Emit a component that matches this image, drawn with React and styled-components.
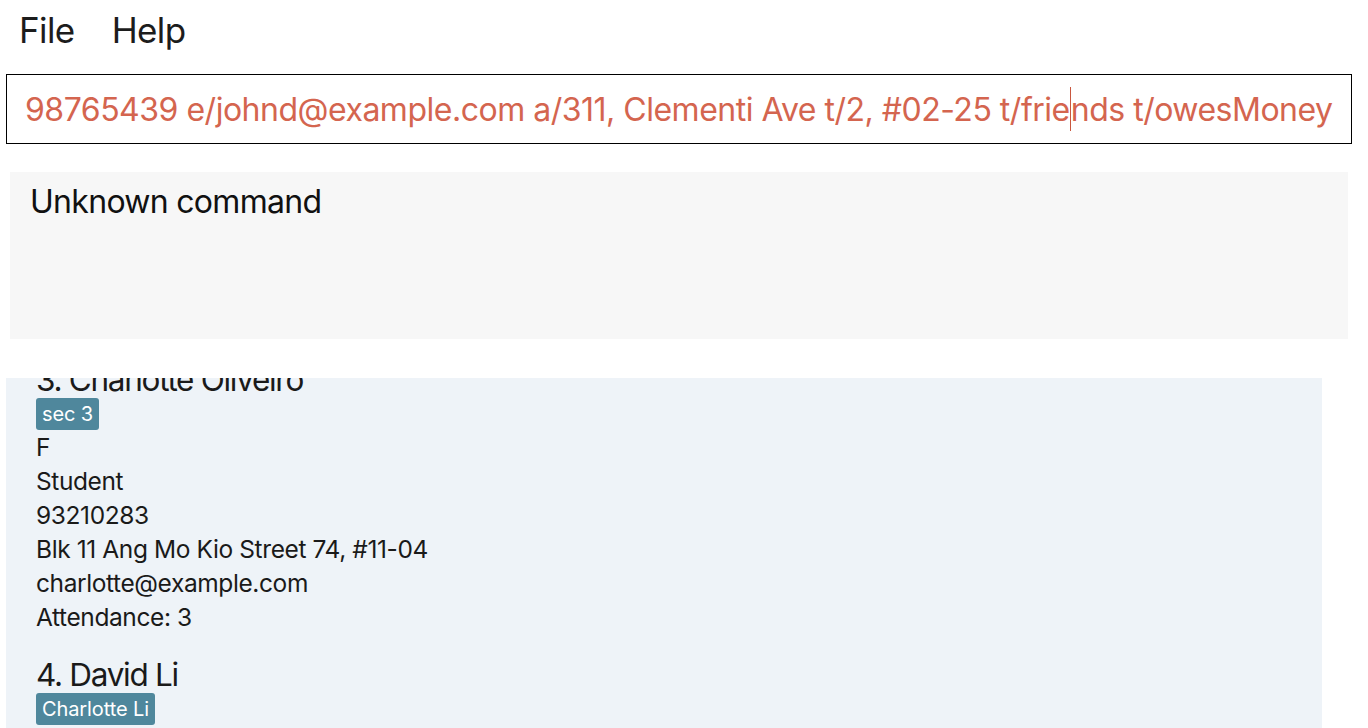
import React from "react";
import styled, { createGlobalStyle } from "styled-components";

const GlobalStyle = createGlobalStyle`
  html, body { margin: 0; padding: 0; background: #ffffff; }
  body {
    font-family: Inter, "Noto Sans", "Liberation Sans", sans-serif;
    color: #1a1a1a;
    width: 1368px;
    height: 728px;
    overflow: hidden;
  }
`;

const Window = styled.div`
  display: flex;
  flex-direction: column;
  width: 1368px;
  height: 728px;
  overflow: hidden;
`;

const MenuBar = styled.nav`
  display: flex;
  align-items: center;
  gap: 37px;
  height: 60px;
  padding-left: 19px;
`;

const MenuItem = styled.span`
  font-size: 35px;
  letter-spacing: -0.6px;
  color: #1c1c1c;
`;

const CommandBox = styled.div`
  margin: 14px 16px 0 6px;
  height: 68px;
  border: 1px solid #000;
  display: flex;
  align-items: center;
  padding: 0 20px 0 18px;
  overflow: hidden;
  white-space: nowrap;
  font-size: 32px;
  letter-spacing: -0.49px;
  color: #d4654f;
`;

const Caret = styled.span`
  display: inline-block;
  flex: none;
  width: 1px;
  height: 44px;
  background: #c9573f;
`;

const ResultBox = styled.div`
  margin: 28px 20px 0 10px;
  height: 167px;
  background: #f7f7f7;
  padding: 11px 20px;
  box-sizing: border-box;
  font-size: 32px;
  line-height: 38px;
  letter-spacing: -0.7px;
  color: #111;
`;

const ListPanel = styled.div`
  margin: 39px 0 0 6px;
  width: 1316px;
  flex: 1;
  background: #eef3f8;
  overflow: hidden;
`;

const ListInner = styled.div`
  margin-top: ${(p) => p.$offset}px;
  display: flex;
  flex-direction: column;
`;

const Card = styled.div`
  padding: 12px 30px 13px;
  display: flex;
  flex-direction: column;
`;

const Name = styled.div`
  font-size: 31.5px;
  line-height: 32px;
  letter-spacing: -1.3px;
  color: #1a1a1a;
`;

const Tags = styled.div`
  display: flex;
  gap: 6px;
  margin-top: 2px;
`;

const Tag = styled.span`
  background: #4f879c;
  color: #ffffff;
  font-size: 20px;
  line-height: 32px;
  height: 32px;
  padding: 0 6px;
  border-radius: 3px;
  letter-spacing: -0.1px;
`;

const Field = styled.div`
  font-size: 24.5px;
  line-height: 34px;
  letter-spacing: -0.4px;
  color: #1a1a1a;
`;

const persons = [
  {
    idx: 3,
    name: "Charlotte Oliveiro",
    tags: ["sec 3"],
    fields: [
      "F",
      "Student",
      "93210283",
      "Blk 11 Ang Mo Kio Street 74, #11-04",
      "charlotte@example.com",
      "Attendance: 3",
    ],
  },
  {
    idx: 4,
    name: "David Li",
    tags: ["Charlotte Li"],
    fields: [
      "M",
      "Parent",
      "91031282",
      "Blk 436 Serangoon Gardens Street 26, #16-43",
      "lidavid@example.com",
      "Attendance: 0",
    ],
  },
];

export default function App() {
  return (
    <>
      <GlobalStyle />
      <Window>
        <MenuBar>
          <MenuItem>File</MenuItem>
          <MenuItem>Help</MenuItem>
        </MenuBar>
        <CommandBox>
          <span>98765439 e/johnd@example.com a/311, Clementi Ave t/2, #02-25 t/frie</span>
          <Caret />
          <span>nds t/owesMoney</span>
        </CommandBox>
        <ResultBox>Unknown command</ResultBox>
        <ListPanel>
          <ListInner $offset={-26}>
            {persons.map((p) => (
              <Card key={p.idx}>
                <Name>
                  {p.idx}. {p.name}
                </Name>
                <Tags>
                  {p.tags.map((t) => (
                    <Tag key={t}>{t}</Tag>
                  ))}
                </Tags>
                {p.fields.map((f, i) => (
                  <Field key={i}>{f}</Field>
                ))}
              </Card>
            ))}
          </ListInner>
        </ListPanel>
      </Window>
    </>
  );
}
